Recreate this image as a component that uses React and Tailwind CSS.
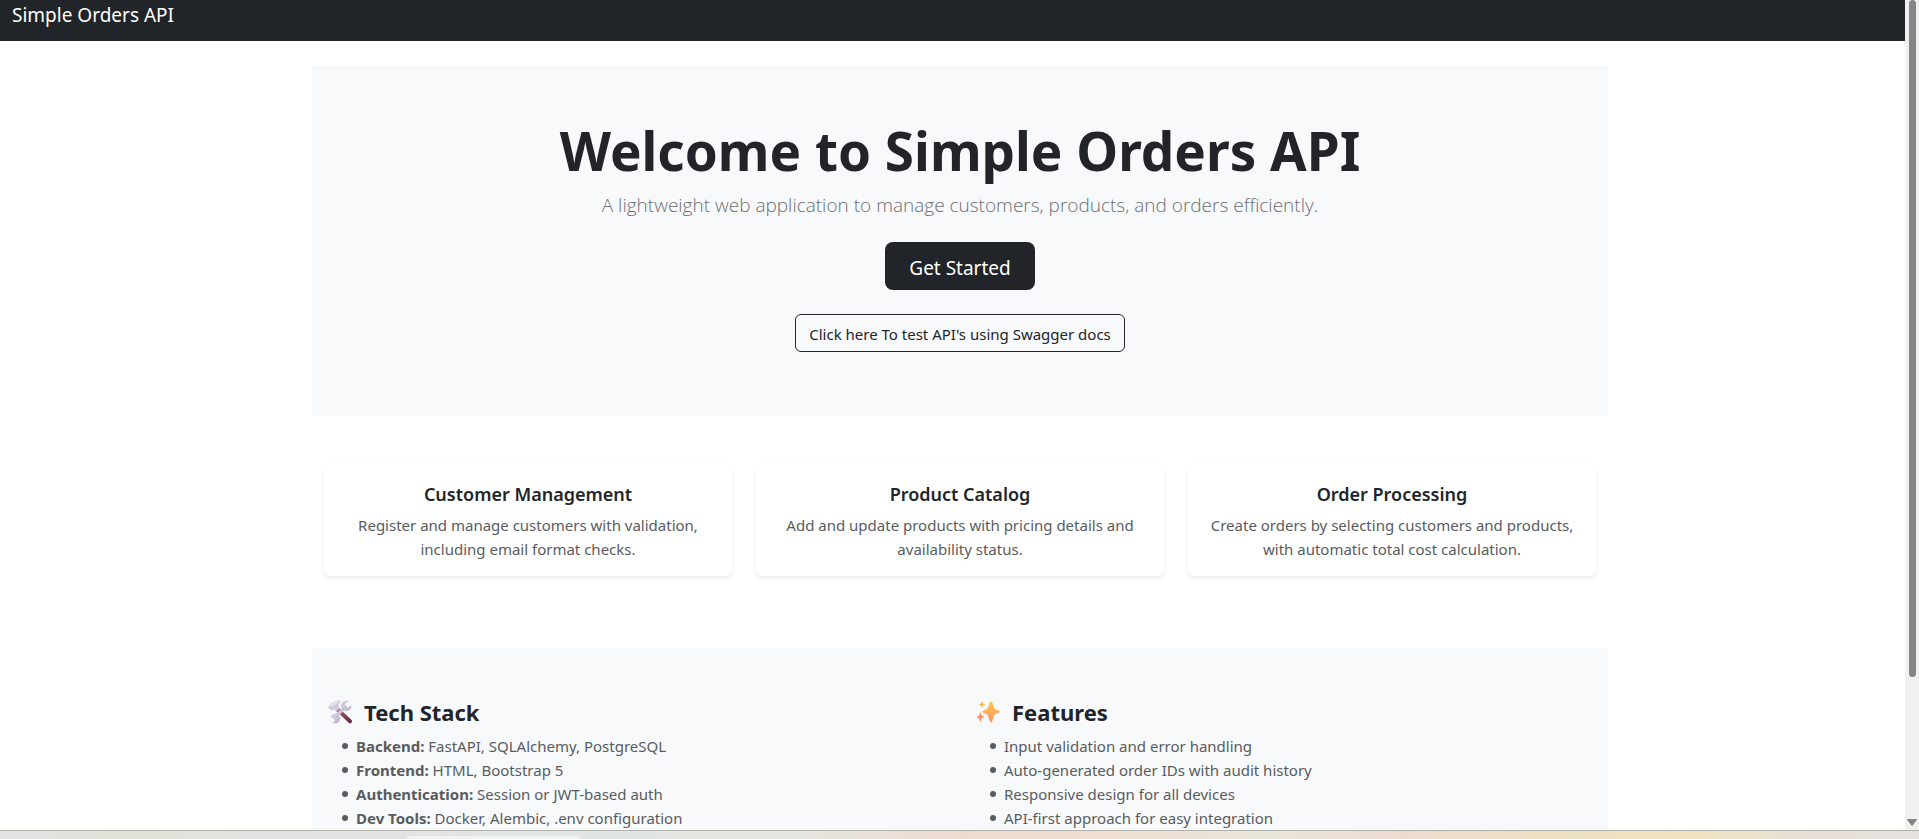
const cards = [
  { title: 'Customer Management', text: 'Register and manage customers with validation, including email format checks.' },
  { title: 'Product Catalog', text: 'Add and update products with pricing details and availability status.' },
  { title: 'Order Processing', text: 'Create orders by selecting customers and products, with automatic total cost calculation.' },
];

const stack = [
  ['Backend:', 'FastAPI, SQLAlchemy, PostgreSQL'],
  ['Frontend:', 'HTML, Bootstrap 5'],
  ['Authentication:', 'Session or JWT-based auth'],
  ['Dev Tools:', 'Docker, Alembic, .env configuration'],
];

const features = [
  'Input validation and error handling',
  'Auto-generated order IDs with audit history',
  'Responsive design for all devices',
  'API-first approach for easy integration',
];

function ToolsIcon() {
  return (
    <svg className="size-6 shrink-0" viewBox="0 0 24 24" aria-hidden="true">
      <defs>
        <linearGradient id="handle" x1="0" y1="0" x2="1" y2="1">
          <stop offset="0" stopColor="#a0616a" />
          <stop offset="1" stopColor="#6b2f4d" />
        </linearGradient>
        <linearGradient id="steel" x1="0" y1="0" x2="1" y2="1">
          <stop offset="0" stopColor="#dcd5e8" />
          <stop offset="1" stopColor="#b9afc9" />
        </linearGradient>
      </defs>
      <path d="M9.5 9.5 L22 21.3" stroke="url(#handle)" strokeWidth="4" strokeLinecap="round" />
      <path d="M5.2 18.5 L18.5 6" stroke="#cdc4da" strokeWidth="3.4" />
      <path d="M20.6 1.2 A5.2 5.2 0 1 0 23.4 5.2 L20 7.4 L17.2 6.6 L17 3.8 Z" fill="url(#steel)" />
      <path d="M4.6 22.9 A5 5 0 1 0 2.3 17.2 L4.8 17 L6.8 18.6 L6.4 21.4 Z" fill="url(#steel)" />
      <path d="M0.3 7.8 L2.4 4.6 Q5.5 0.6 11.8 0.5 L12.6 1 L10.2 4.8 L11.6 8.6 L8.7 11.5 L5.8 9 L3.2 10.8 Z" fill="#cfc8dd" />
      <path d="M2.4 4.6 Q5.5 0.6 11.8 0.5 L8 4.4 L3.4 7.5 Z" fill="#e3deec" />
    </svg>
  );
}

function SparklesIcon() {
  return (
    <svg className="size-6 shrink-0" viewBox="0 0 24 24" aria-hidden="true">
      <defs>
        <linearGradient id="spark" x1="0" y1="0" x2="0" y2="1">
          <stop offset="0" stopColor="#fcc64b" />
          <stop offset="1" stopColor="#ff9565" />
        </linearGradient>
      </defs>
      <path d="M15 1.4 Q16 1.4 16.3 2.4 L18 7.6 Q18.4 8.8 19.6 9.3 L23.2 10.9 Q24.4 11.7 23.2 12.5 L19.6 14 Q18.4 14.5 18 15.7 L16.3 21.2 Q16 22.2 15 22.2 Q14 22.2 13.7 21.2 L12 15.7 Q11.6 14.5 10.4 14 L6.8 12.5 Q5.6 11.7 6.8 10.9 L10.4 9.3 Q11.6 8.8 12 7.6 L13.7 2.4 Q14 1.4 15 1.4 Z" fill="url(#spark)" />
      <path d="M6 1 L7.1 3.5 L9.4 4.5 L7.1 5.5 L6 8 L4.9 5.5 L2.6 4.5 L4.9 3.5 Z" fill="#fdbb4f" />
      <path d="M4.3 12 L5.6 15.6 L8.4 17 L5.6 18.4 L4.3 22.4 L3 18.4 L0.4 17 L3 15.6 Z" fill="#ff9068" />
    </svg>
  );
}

function ListPanel({ icon, title, children }) {
  return (
    <section className="px-4">
      <h2 className="flex items-center gap-3 text-[22px] leading-7 font-bold text-[#212529]">
        {icon}
        {title}
      </h2>
      <ul className="mt-2 pl-[14px] text-[15px] leading-6 text-[#595c5f]">{children}</ul>
    </section>
  );
}

function Bullet({ children }) {
  return (
    <li className="flex items-center gap-2 before:size-1.5 before:shrink-0 before:rounded-full before:bg-[#595c5f]">
      <span>{children}</span>
    </li>
  );
}

export default function App() {
  return (
    <div className="flex h-screen flex-col overflow-hidden bg-white font-['Noto_Sans','Open_Sans',sans-serif] text-[#212529]">
      <div className="flex min-h-0 flex-1">
        <div className="min-w-0 flex-1 overflow-hidden">
          <nav className="h-[41px] bg-[#212529] px-3">
            <a href="#home" className="text-[19px] leading-[30px] text-white">Simple Orders API</a>
          </nav>

          <main className="pt-6 pl-[15px]">
            <div className="mx-auto max-w-[1296px]">
              <header className="flex flex-col items-center bg-[#f8f9fb] px-4 pt-[52px] pb-16 text-center">
                <h1 className="text-[53px] leading-[67px] font-bold">Welcome to Simple Orders API</h1>
                <p className="mt-1.5 font-['Open_Sans'] text-[19px] leading-[30px] font-light text-[#6c7075]">
                  A lightweight web application to manage customers, products, and orders efficiently.
                </p>
                <a href="#start" className="mt-[22px] flex h-12 w-[150px] items-center justify-center rounded-lg bg-[#212529] pt-1 text-[19px] text-white">
                  Get Started
                </a>
                <a href="#docs" className="mt-6 flex h-[38px] w-[330px] items-center justify-center rounded-md border border-[#212529] pt-0.5 text-[15px]">
                  Click here To test API's using Swagger docs
                </a>
              </header>

              <div className="mt-12 grid grid-cols-3 gap-6 px-3">
                {cards.map((card) => (
                  <article key={card.title} className="rounded-md bg-white px-4 pt-[18px] pb-[15px] text-center shadow-[0_2px_4px_rgba(0,0,0,0.075)]">
                    <h2 className="text-[18px] leading-6 font-semibold">{card.title}</h2>
                    <p className="mt-[7px] text-[15px] leading-6 text-[#595c5f]">{card.text}</p>
                  </article>
                ))}
              </div>

              <div className="mt-[72px] grid grid-cols-2 bg-[#f8f9fb] pt-[50px] pb-12">
                <ListPanel icon={<ToolsIcon />} title="Tech Stack">
                  {stack.map(([label, value]) => (
                    <Bullet key={label}>
                      <strong>{label}</strong> {value}
                    </Bullet>
                  ))}
                </ListPanel>
                <ListPanel icon={<SparklesIcon />} title="Features">
                  {features.map((item) => (
                    <Bullet key={item}>{item}</Bullet>
                  ))}
                </ListPanel>
              </div>
            </div>
          </main>
        </div>

        <div className="flex w-[14px] shrink-0 flex-col items-center justify-between bg-[#f0f0f0] pb-1" aria-hidden="true">
          <div className="h-[82%] w-[7px] rounded-full bg-[#858585]" />
          <svg className="h-[7px] w-[10px]" viewBox="0 0 10 7">
            <path d="M0.5 0 H9.5 Q10 0.6 9.6 1.2 L5.6 6.6 Q5 7.2 4.4 6.6 L0.4 1.2 Q0 0.6 0.5 0 Z" fill="#858585" />
          </svg>
        </div>
      </div>

      <footer className="h-[9px] shrink-0 border-t border-[#b2b2ac] bg-[linear-gradient(90deg,#e2e2e2_0%,#e0e2d8_7%,#e3e4e1_14%,#e0e5e2_30%,#e5e5df_42%,#eedbd0_50%,#eedfd1_58%,#e9e5d9_66%,#eedbd0_73%,#ecdfc3_80%,#efe3bf_88%,#e6dfd8_95%,#e6e2df_100%)] pt-[5px] pl-[407px]">
        <div className="h-[3px] w-[173px] rounded-t bg-[#f3f3f2]" />
      </footer>
    </div>
  );
}
